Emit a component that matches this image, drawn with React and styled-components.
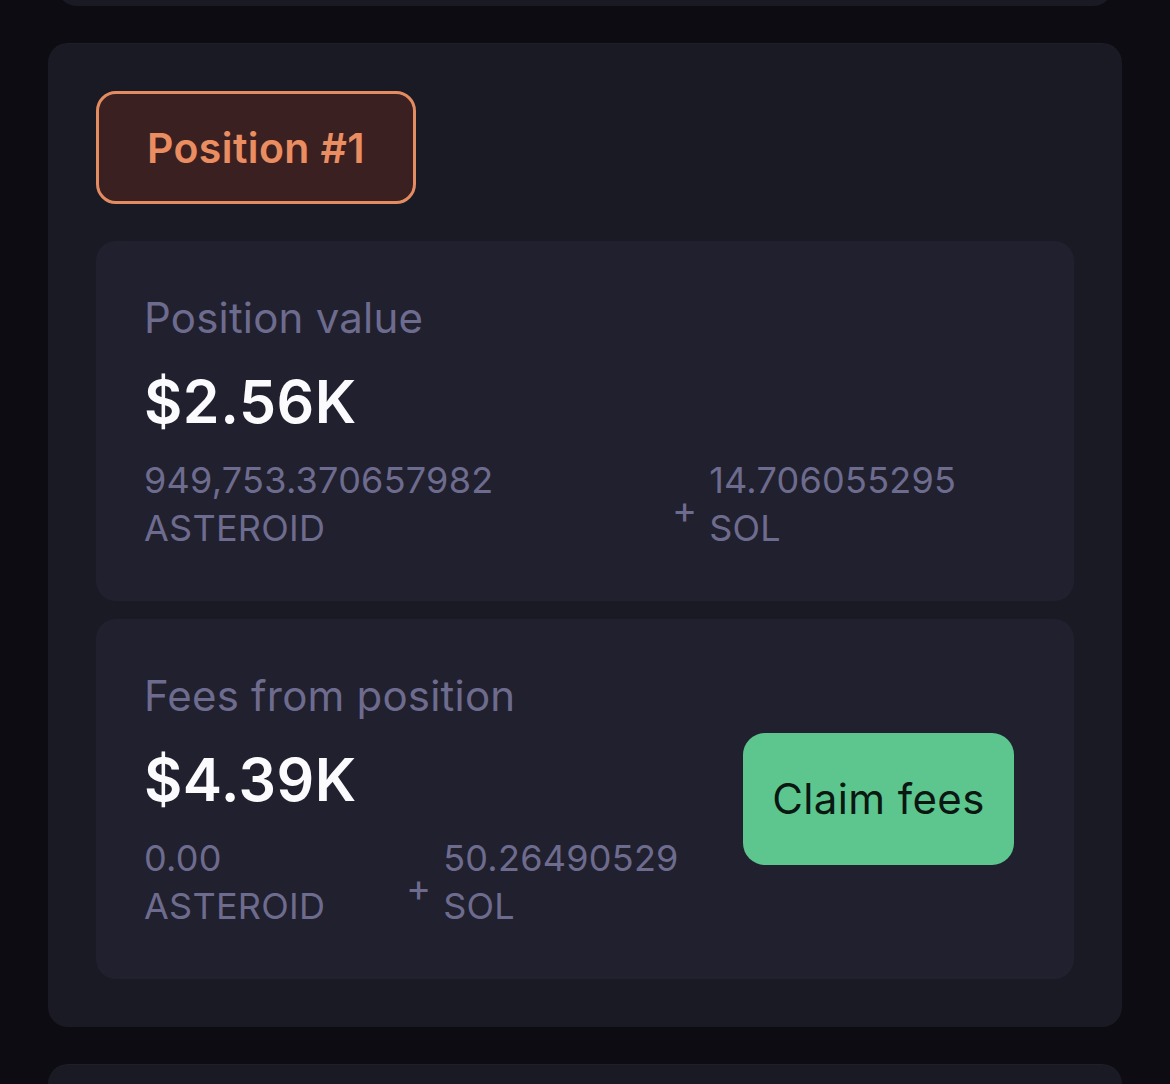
import React from "react";
import styled, { createGlobalStyle } from "styled-components";

const GlobalStyle = createGlobalStyle`
  html, body {
    margin: 0;
    padding: 0;
    background: #0d0c12;
  }
  body {
    font-family: Inter, "Noto Sans", "Liberation Sans", sans-serif;
    -webkit-font-smoothing: antialiased;
  }
`;

const Viewport = styled.div`
  height: 1084px;
  overflow: hidden;
`;

const Stack = styled.div`
  display: flex;
  flex-direction: column;
  gap: 37px;
  padding: 0 48px;
  margin-top: -94px;
`;

const PanelCard = styled.section`
  background: #1a1a24;
  border-radius: 20px;
  box-shadow: inset 0 1px 0 rgba(255, 255, 255, 0.025);
  margin: 0 ${(p) => p.$inset || 0}px;
  min-height: ${(p) => p.$minHeight || 0}px;
`;

const PositionCard = styled(PanelCard)`
  display: flex;
  flex-direction: column;
  padding: 48px;
`;

const Badge = styled.div`
  align-self: flex-start;
  box-sizing: border-box;
  width: 320px;
  height: 113px;
  display: flex;
  align-items: center;
  justify-content: center;
  background: #3a2021;
  border: 3px solid #e38b61;
  border-radius: 20px;
  color: #ea8d61;
  font-size: 41px;
  font-weight: 600;
  letter-spacing: 0.4px;
  margin-bottom: 37px;
`;

const InfoList = styled.div`
  display: flex;
  flex-direction: column;
  gap: 18px;
`;

const InfoCard = styled.div`
  background: #21202f;
  border-radius: 20px;
  padding: 48px 60px 49px 48px;
  display: flex;
  align-items: center;
  gap: 40px;
`;

const InfoBody = styled.div`
  flex: 1;
  display: flex;
  flex-direction: column;
`;

const Label = styled.div`
  color: #6e6c8e;
  font-size: 42px;
  line-height: 58px;
  font-weight: 400;
  letter-spacing: 0.2px;
`;

const Value = styled.div`
  color: #fbfbfd;
  font-size: 59px;
  line-height: 70px;
  font-weight: 600;
  margin-top: 20px;
  letter-spacing: 0.5px;
`;

const AmountRow = styled.div`
  display: grid;
  grid-template-columns: ${(p) => p.$left}px auto auto;
  justify-content: start;
  column-gap: 12px;
  margin-top: 19px;
`;

const Amount = styled.div`
  color: #6e6c8e;
  font-size: 36px;
  line-height: 48px;
  font-weight: 400;
  letter-spacing: 0.25px;
  display: flex;
  flex-direction: column;
`;

const Plus = styled.span`
  color: #6e6c8e;
  font-size: 38px;
  line-height: 38px;
  font-weight: 400;
  align-self: center;
  margin-top: 10px;
`;

const ClaimButton = styled.button`
  flex: none;
  width: 271px;
  height: 132px;
  border: none;
  border-radius: 22px;
  background: #5dc68f;
  color: #0b1711;
  font-family: inherit;
  font-size: 42px;
  font-weight: 400;
  letter-spacing: 0.4px;
  cursor: pointer;
`;

function Info({ label, value, left, a, b, children }) {
  return (
    <InfoCard>
      <InfoBody>
        <Label>{label}</Label>
        <Value>{value}</Value>
        <AmountRow $left={left}>
          <Amount>
            <span>{a[0]}</span>
            <span>{a[1]}</span>
          </Amount>
          <Plus>+</Plus>
          <Amount>
            <span>{b[0]}</span>
            <span>{b[1]}</span>
          </Amount>
        </AmountRow>
      </InfoBody>
      {children}
    </InfoCard>
  );
}

export default function App() {
  return (
    <>
      <GlobalStyle />
      <Viewport>
        <Stack>
          <PanelCard $inset={9} $minHeight={100} />
          <PositionCard>
            <Badge>Position #1</Badge>
            <InfoList>
              <Info
                label="Position value"
                value="$2.56K"
                left={516}
                a={["949,753.370657982", "ASTEROID"]}
                b={["14.706055295", "SOL"]}
              />
              <Info
                label="Fees from position"
                value="$4.39K"
                left={250}
                a={["0.00", "ASTEROID"]}
                b={["50.26490529", "SOL"]}
              >
                <ClaimButton>Claim fees</ClaimButton>
              </Info>
            </InfoList>
          </PositionCard>
          <PanelCard $minHeight={200} />
        </Stack>
      </Viewport>
    </>
  );
}
